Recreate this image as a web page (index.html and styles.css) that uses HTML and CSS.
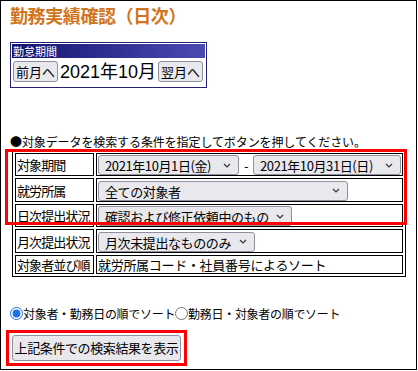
FILE: index.html
```html
<!DOCTYPE html>
<html lang="ja">
<head>
    <meta charset="UTF-8">
    <title>勤務実績確認（日次）</title>
    <link rel="stylesheet" href="styles.css">
</head>
<body>

<div class="frame">
    <h1 class="title">勤務実績確認（日次）</h1>

    <div class="period">
        <div class="period-head">勤怠期間</div>
        <div class="period-row">
            <button class="small-btn">前月へ</button>
            <span class="month">2021年10月</span>
            <button class="small-btn">翌月へ</button>
        </div>
    </div>

    <p class="hint">●対象データを検索する条件を指定してボタンを押してください。</p>

    <div class="cond-wrap">
        <table class="cond">
            <tr>
                <th>対象期間</th>
                <td>
                    <select class="sel-from"><option>2021年10月1日(金)</option></select><span class="dash">-</span><select class="sel-to"><option>2021年10月31日(日)</option></select>
                </td>
            </tr>
            <tr>
                <th>就労所属</th>
                <td><select class="sel-org"><option>全ての対象者</option></select></td>
            </tr>
            <tr>
                <th>日次提出状況</th>
                <td><select class="sel-daily"><option>確認および修正依頼中のもの</option></select></td>
            </tr>
            <tr>
                <th>月次提出状況</th>
                <td><select class="sel-monthly"><option>月次未提出なもののみ</option></select></td>
            </tr>
            <tr class="last">
                <th>対象者並び順</th>
                <td>就労所属コード・社員番号によるソート</td>
            </tr>
        </table>
        <div class="mark mark-table"></div>
    </div>

    <div class="sort">
        <label><input type="radio" name="sort" checked>対象者・勤務日の順でソート</label><label><input type="radio" name="sort">勤務日・対象者の順でソート</label>
    </div>

    <div class="mark-btn">
        <button class="search-btn">上記条件での検索結果を表示</button>
    </div>
</div>

</body>
</html>
```

FILE: styles.css
```css
body {
    margin: 0;
    font-family: "Noto Sans CJK JP", "DejaVu Sans", sans-serif;
    color: #000;
    background: #fff;
}
.frame {
    width: 406px;
    height: 368px;
    border: 1px solid #000;
    padding: 0 0 0 9px;
    overflow: hidden;
}
.title {
    margin: 1px 0 0 0;
    font-size: 18px;
    line-height: 26px;
    font-weight: bold;
    color: #d2741c;
    letter-spacing: -0.4px;
}
.period {
    margin-top: 14px;
    border: 1px solid #22227a;
    padding: 1px;
    box-sizing: border-box;
    height: 46px;
    width: 197px;
}
.period-head {
    height: 14px;
    line-height: 14px;
    font-size: 11px;
    color: #fff;
    padding-left: 1px;
    background: linear-gradient(to right, #14146e, #4a4ab4);
}
.period-row {
    display: flex;
    align-items: center;
    margin-top: 3px;
    padding-left: 1px;
}
.small-btn {
    font-family: inherit;
    font-size: 13px;
    height: 21px;
    padding: 0 2px;
    line-height: 19px;
    border: 1px solid #8f8f9d;
    border-radius: 3px;
    background: #e9e9ed;
    white-space: nowrap;
}
.month {
    font-family: "Liberation Sans", "Noto Sans CJK JP", sans-serif;
    font-size: 18px;
    line-height: 20px;
    margin: 0 2px;
}
.hint {
    margin: 46px 0 0 0;
    font-size: 12px;
    line-height: 16px;
    letter-spacing: -0.1px;
}
.cond-wrap {
    position: relative;
    margin-left: 2px;
    width: 394px;
}
.cond {
    width: 394px;
    border: 1px solid #000;
    border-spacing: 2px;
    font-size: 13px;
}
.cond th,
.cond td {
    border: 1px solid #000;
    padding: 0 1px;
    height: 20px;
    text-align: left;
    font-weight: normal;
    white-space: nowrap;
}
.cond th {
    width: 77px;
    letter-spacing: -0.9px;
}
.cond td {
    letter-spacing: -0.3px;
}
.cond tr.last th,
.cond tr.last td {
    height: 17px;
    line-height: 17px;
}
.cond select {
    appearance: none;
    font-family: inherit;
    font-size: 13px;
    letter-spacing: -0.4px;
    height: 20px;
    padding: 0 16px 0 6px;
    border: 1px solid #8f8f9d;
    border-radius: 3px;
    background-color: #e9e9ed;
    background-image: url("data:image/svg+xml,%3Csvg xmlns='http://www.w3.org/2000/svg' width='8' height='5'%3E%3Cpath d='M1 1l3 3 3-3' fill='none' stroke='%23333' stroke-width='1.2'/%3E%3C/svg%3E");
    background-repeat: no-repeat;
    background-position: right 7px center;
    vertical-align: middle;
    color: #000;
}
.dash {
    display: inline-block;
    width: 14px;
    text-align: center;
    vertical-align: middle;
}
.sel-from { width: 141px; }
.sel-to { width: 148px; }
.sel-org { width: 250px; }
.sel-daily { width: 194px; }
.sel-monthly { width: 157px; }
.mark {
    position: absolute;
    border: 3px solid #f00;
    pointer-events: none;
}
.mark-table {
    left: -7px;
    top: -1px;
    width: 396px;
    height: 70px;
}
.sort {
    margin-top: 29px;
    font-size: 12px;
    line-height: 16px;
    display: flex;
    letter-spacing: -0.3px;
}
.sort label {
    display: flex;
    align-items: center;
}
.sort input {
    margin: 0;
    width: 13px;
    height: 13px;
    accent-color: #1a73e8;
}
.mark-btn {
    margin: 8px 0 0 -4px;
    width: 175px;
    height: 30px;
    border: 3px solid #f00;
    display: flex;
    align-items: center;
    justify-content: center;
}
.search-btn {
    font-family: inherit;
    font-size: 13px;
    height: 26px;
    padding: 0 2px;
    border: 1px solid #8f8f9d;
    border-radius: 3px;
    background: #e9e9ed;
    white-space: nowrap;
    letter-spacing: -0.4px;
}
```
